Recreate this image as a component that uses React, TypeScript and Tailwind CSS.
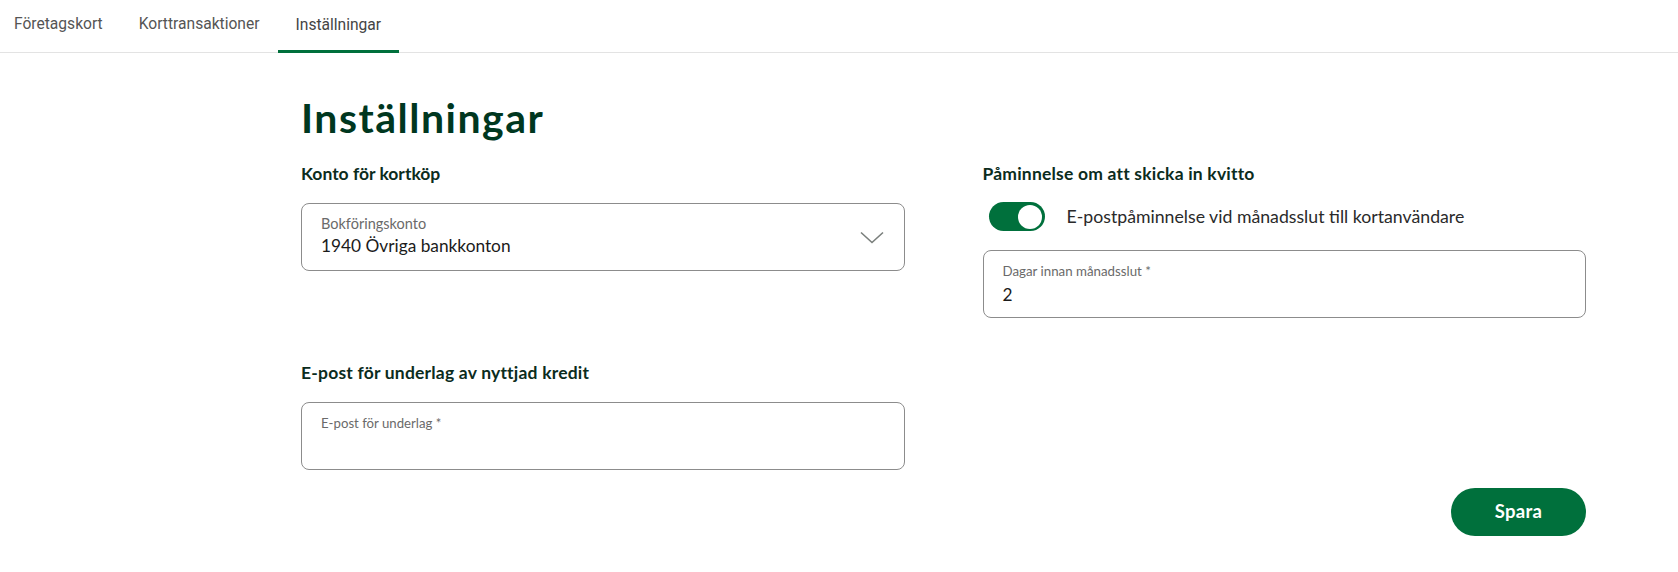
import { useState } from 'react'

const TABS = ['Företagskort', 'Korttransaktioner', 'Inställningar']

function Chevron() {
  return (
    <svg width="24" height="13" viewBox="0 0 24 13" fill="none">
      <path d="M1 1.5 L12 11.5 L23 1.5" stroke="#7a7f7c" strokeWidth="1.6" />
    </svg>
  )
}

function Field({ label, value, labelSize = 'text-[13.5px]' }: { label: string; value?: string; labelSize?: string }) {
  return (
    <div className="h-[68px] rounded-[8px] border border-[#8c8c8c] px-[19px] pt-[10px] flex flex-col">
      <span className={`${labelSize} leading-[20px] text-[#6a6a6a]`}>{label}</span>
      <span className="text-[17.3px] leading-[24px] text-[#1b1b1b] mt-[2px]">{value}</span>
    </div>
  )
}

export default function App() {
  const [active] = useState(2)
  const [reminder, setReminder] = useState(true)

  return (
    <div className="w-[1678px] h-[572px] bg-white font-['Lato',sans-serif] text-[#1b1b1b]">
      <nav className="flex h-[53px] border-b border-[#e3e3e3] font-['Roboto',sans-serif] -ml-[4px]">
        {TABS.map((t, i) => (
          <div
            key={t}
            className={`px-[18px] flex items-center text-[15.6px] pb-[2px] ${
              i === active ? 'text-[#444] border-b-[3px] border-[#00703c] -mb-[1px] pt-[3px]' : 'text-[#555]'
            }`}
          >
            {t}
          </div>
        ))}
      </nav>

      <main className="ml-[301px] w-[1285px] pt-[41px]">
        <h1 className="text-[41px] leading-[48px] font-bold text-[#00371f] tracking-[1.5px]">Inställningar</h1>

        <div className="grid grid-cols-2 gap-x-[78px] mt-[20px]">
          {/* left column */}
          <div className="flex flex-col">
            <h2 className="text-[17.5px] leading-[24px] font-bold text-[#0b2c1d]">Konto för kortköp</h2>
            <div className="mt-[17px] h-[68px] rounded-[8px] border border-[#8c8c8c] pl-[19px] pr-[20px] flex items-center">
              <div className="flex-1 flex flex-col pb-[2px]">
                <span className="text-[14.5px] leading-[20px] text-[#6a6a6a]">Bokföringskonto</span>
                <span className="text-[17.3px] leading-[24px] text-[#1b1b1b]">1940 Övriga bankkonton</span>
              </div>
              <Chevron />
            </div>

            <h2 className="mt-[90px] text-[17.5px] leading-[24px] font-bold text-[#0b2c1d] tracking-[0.2px]">
              E-post för underlag av nyttjad kredit
            </h2>
            <div className="mt-[17px]">
              <Field label="E-post för underlag *" labelSize="text-[13.2px]" />
            </div>
          </div>

          {/* right column */}
          <div className="flex flex-col">
            <h2 className="text-[17.5px] leading-[24px] font-bold text-[#0b2c1d] tracking-[0.2px]">
              Påminnelse om att skicka in kvitto
            </h2>
            <div className="mt-[16px] ml-[6px] flex items-center gap-[22px]">
              <button
                onClick={() => setReminder(!reminder)}
                className={`w-[56px] h-[29px] rounded-full flex items-center px-[3px] ${
                  reminder ? 'bg-[#00703c] justify-end' : 'bg-[#9a9a9a] justify-start'
                }`}
              >
                <span className="w-[24px] h-[24px] rounded-full bg-white" />
              </button>
              <span className="text-[17.7px] leading-[24px] text-[#2a2a2a]">
                E-postpåminnelse vid månadsslut till kortanvändare
              </span>
            </div>
            <div className="mt-[19px]">
              <Field label="Dagar innan månadsslut *" value="2" labelSize="text-[13.3px]" />
            </div>
          </div>
        </div>

        <div className="flex justify-end mt-[18px]">
          <button className="w-[135px] h-[48px] rounded-full bg-[#00703c] text-white text-[18.5px] font-bold tracking-[0.3px]">
            Spara
          </button>
        </div>
      </main>
    </div>
  )
}
